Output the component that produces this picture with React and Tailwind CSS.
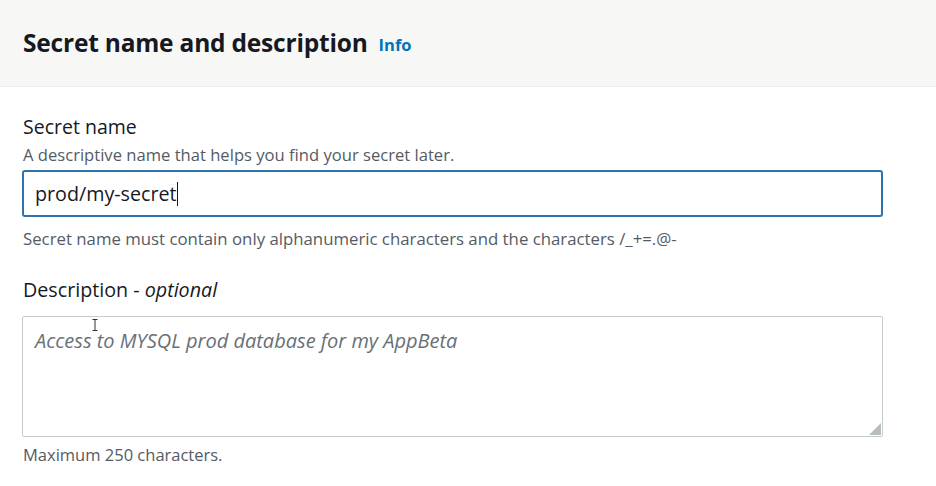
export default function App() {
  const font = { fontFamily: '"Open Sans", "Liberation Sans", sans-serif' };
  return (
    <div className="w-[936px] h-[486px] bg-white overflow-hidden" style={font}>
      <div className="h-[87px] bg-[#f7f8f6] border-b border-[#eaeded] flex items-center pl-[23px]">
        <span className="text-[24.5px] font-bold text-[#16191f] tracking-[-0.2px]">Secret name and description</span>
        <span className="ml-[11px] mt-[4px] text-[16.5px] font-bold text-[#0073bb]">Info</span>
      </div>
      <div className="pl-[22px] pr-[53px] pt-[28px]">
        <div className="pl-[1px] text-[19.5px] text-[#16191f] leading-[24px]">Secret name</div>
        <div className="pl-[1px] text-[16.6px] text-[#545b64] leading-[22px] mt-[5px]">A descriptive name that helps you find your secret later.</div>
        <div className="mt-[4px] h-[47px] border-2 border-[#2e73ad] rounded-[3px] flex items-center pl-[11px]">
          <span className="text-[19.7px] text-[#16191f]">prod/my-secret</span>
          <span className="w-[1px] h-[24px] bg-[#16191f]"></span>
        </div>
        <div className="pl-[1px] mt-[11px] text-[16.8px] text-[#545b64] leading-[22px]">Secret name must contain only alphanumeric characters and the characters /_+=.@-</div>
        <div className="pl-[1px] mt-[28px] text-[19.7px] text-[#16191f] leading-[24px]">
          Description - <span className="italic">optional</span>
        </div>
        <div className="relative mt-[14px] h-[121px] border border-[#c4cccc] rounded-[2px] pl-[12px] pt-[9px]">
          <span className="text-[20px] italic text-[#687078]">Access to MYSQL prod database for my AppBeta</span>
          <svg className="absolute left-[69px] top-[2px]" width="6" height="12" viewBox="0 0 6 12">
            <path d="M0.5 0.5 H5.5 M3 0.5 V11.5 M0.5 11.5 H5.5" stroke="#333" strokeWidth="1" fill="none" />
          </svg>
          <svg className="absolute right-[1px] bottom-[1px]" width="12" height="12" viewBox="0 0 12 12">
            <path d="M12 0 L12 12 L0 12 Z" fill="#b8bcbc" />
          </svg>
        </div>
        <div className="pl-[1px] mt-[7px] text-[16.5px] text-[#545b64] leading-[22px]">Maximum 250 characters.</div>
      </div>
    </div>
  );
}
